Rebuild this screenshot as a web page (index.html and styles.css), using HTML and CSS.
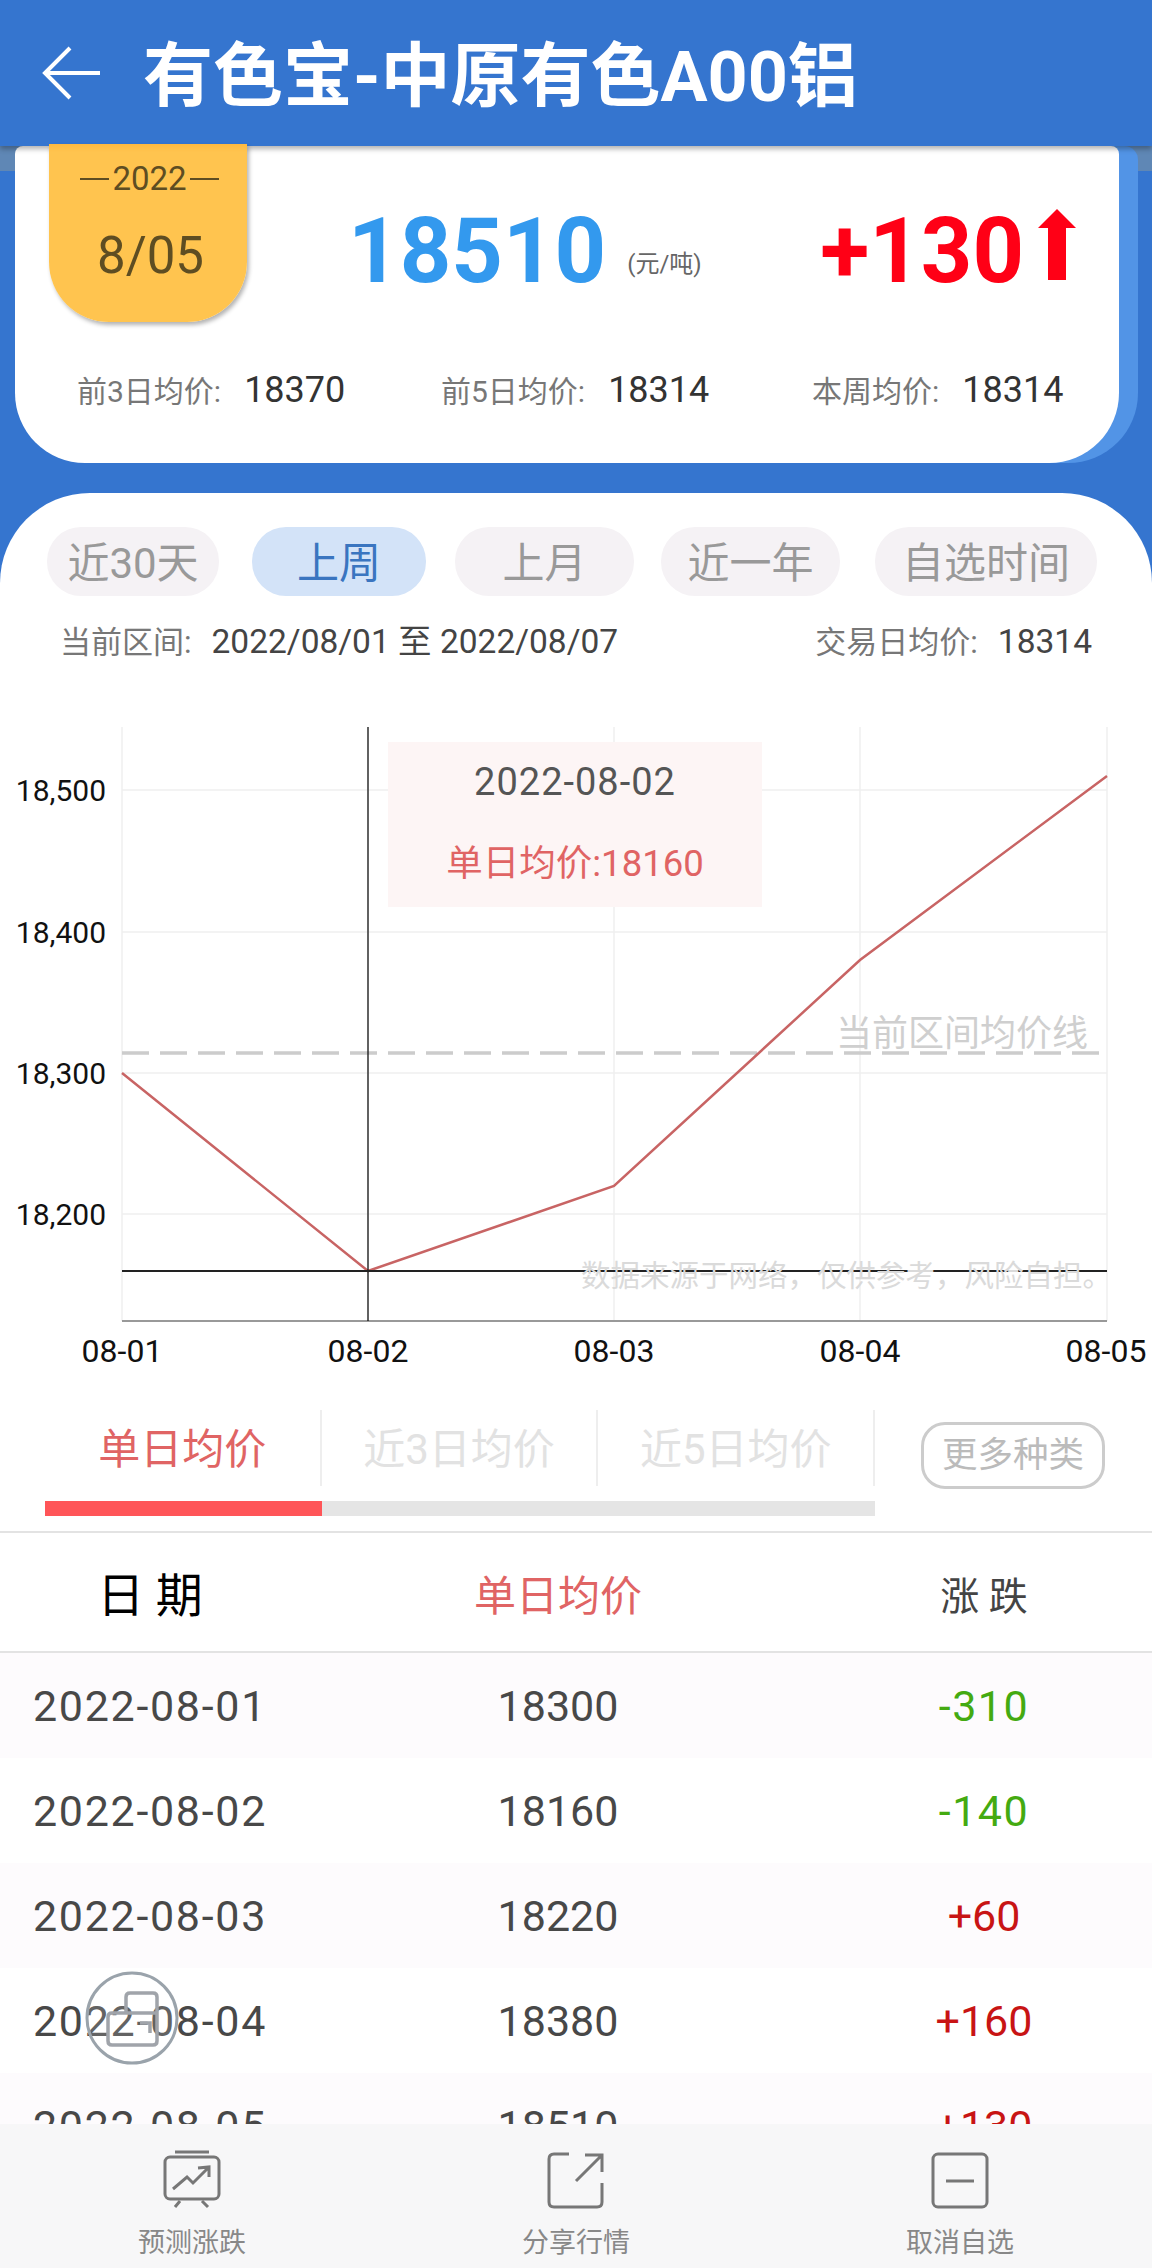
FILE: index.html
```html
<!DOCTYPE html>
<html>
<head>
    <title>有色宝-中原有色A00铝</title>
    <meta charset="utf-8">
    <link rel="stylesheet" href="styles.css">
</head>
<body>
    <div class="page">
        <div class="top-bar">
            <svg class="back-icon" viewBox="0 0 60 56" width="60" height="56">
                <path d="M28 3 L3 28 L28 53 M3 28 H58"></path>
            </svg>
            <div class="top-title">有色宝-中原有色A00铝</div>
        </div>

        <div class="summary">
            <div class="summary-shade"></div>
            <div class="summary-edge"></div>
            <div class="summary-card">
                <div class="summary-top">
                    <div class="date-tag">
                        <div class="date-year">2022</div>
                        <div class="date-day">8/05</div>
                    </div>
                    <div class="price">18510</div>
                    <div class="price-unit">(元/吨)</div>
                    <div class="change">+130</div>
                    <svg class="change-arrow" viewBox="0 0 38 71" width="38" height="71">
                        <path d="M19 0 L38 19 H28 V71 H10 V19 H0 Z"></path>
                    </svg>
                </div>
                <div class="summary-stats">
                    <div class="stat"><span class="stat-label">前3日均价:</span><span class="stat-value">18370</span></div>
                    <div class="stat"><span class="stat-label">前5日均价:</span><span class="stat-value">18314</span></div>
                    <div class="stat"><span class="stat-label">本周均价:</span><span class="stat-value">18314</span></div>
                </div>
            </div>
        </div>

        <div class="panel">
            <div class="pills">
                <div class="pill pill-30">近30天</div>
                <div class="pill pill-week active">上周</div>
                <div class="pill pill-month">上月</div>
                <div class="pill pill-year">近一年</div>
                <div class="pill pill-custom">自选时间</div>
            </div>
            <div class="range-row">
                <div><span class="range-label">当前区间:</span><span class="range-value">2022/08/01 至 2022/08/07</span></div>
                <div><span class="range-label">交易日均价:</span><span class="range-value">18314</span></div>
            </div>

            <svg class="chart" viewBox="0 700 1152 685" width="1152" height="685">
                <g class="grid">
                    <path d="M122 727 V1321 M368 727 V1321 M614 727 V1321 M860 727 V1321 M1107 727 V1321"></path>
                    <path d="M122 790 H1107 M122 932 H1107 M122 1073 H1107 M122 1214 H1107"></path>
                </g>
                <path class="axis" d="M122 1321 H1107"></path>
                <path class="avg-line" d="M122 1053 H1102"></path>
                <polyline class="price-line" points="122,1073 368,1271 614,1186 860,960 1107,776"></polyline>
                <path class="cross-v" d="M368 727 V1321"></path>
                <path class="cross-h" d="M122 1271 H1107"></path>

                <text class="y-label" x="106" y="801">18,500</text>
                <text class="y-label" x="106" y="943">18,400</text>
                <text class="y-label" x="106" y="1084">18,300</text>
                <text class="y-label" x="106" y="1225">18,200</text>

                <text class="x-label" x="122" y="1362">08-01</text>
                <text class="x-label" x="368" y="1362">08-02</text>
                <text class="x-label" x="614" y="1362">08-03</text>
                <text class="x-label" x="860" y="1362">08-04</text>
                <text class="x-label" x="1106" y="1362">08-05</text>

                <text class="avg-label" x="1088" y="1046">当前区间均价线</text>
                <text class="source-label" x="1112" y="1286">数据来源于网络&#xFF0C;仅供参考&#xFF0C;风险自担。</text>

                <rect class="tip-box" x="388" y="742" width="374" height="165"></rect>
                <text class="tip-date" x="575" y="795">2022-08-02</text>
                <text class="tip-value" x="575" y="876">单日均价:18160</text>
            </svg>

            <div class="tab-row">
                <div class="tab-group">
                    <div class="tabs">
                        <div class="tab active">单日均价</div>
                        <div class="tab">近3日均价</div>
                        <div class="tab">近5日均价</div>
                    </div>
                    <div class="tab-track"><div class="tab-track-on"></div></div>
                </div>
                <div class="more-btn">更多种类</div>
            </div>

            <div class="table-head">
                <div class="col-date head-date">日 期</div>
                <div class="col-avg head-avg">单日均价</div>
                <div class="col-change head-change">涨 跌</div>
            </div>
            <div class="table-body">
                <div class="row"><div class="col-date">2022-08-01</div><div class="col-avg">18300</div><div class="col-change down">-310</div></div>
                <div class="row"><div class="col-date">2022-08-02</div><div class="col-avg">18160</div><div class="col-change down">-140</div></div>
                <div class="row"><div class="col-date">2022-08-03</div><div class="col-avg">18220</div><div class="col-change up">+60</div></div>
                <div class="row"><div class="col-date">2022-08-04</div><div class="col-avg">18380</div><div class="col-change up">+160</div></div>
                <div class="row"><div class="col-date">2022-08-05</div><div class="col-avg">18510</div><div class="col-change up">+130</div></div>
            </div>
        </div>

        <div class="bottom-bar">
            <div class="bottom-item">
                <svg class="bottom-icon" viewBox="0 0 60 60" width="60" height="60">
                    <path d="M13 2 H47"></path>
                    <rect x="3" y="7" width="54" height="42" rx="5"></rect>
                    <path d="M18 51 L13 57 M40 51 L46 57"></path>
                    <path d="M11 39 L25 27 L31 33 L47 17 M36 18 L47 17 L47 27"></path>
                </svg>
                <div class="bottom-text">预测涨跌</div>
            </div>
            <div class="bottom-item">
                <svg class="bottom-icon" viewBox="0 0 60 60" width="60" height="60">
                    <path d="M23 4 H8 Q3 4 3 9 V52 Q3 57 8 57 H51 Q56 57 56 52 V33"></path>
                    <path d="M30 31 L56 5 M39 5 H56 V22"></path>
                </svg>
                <div class="bottom-text">分享行情</div>
            </div>
            <div class="bottom-item">
                <svg class="bottom-icon" viewBox="0 0 60 60" width="60" height="60">
                    <rect x="3" y="4" width="54" height="53" rx="5"></rect>
                    <path d="M16 31 H44"></path>
                </svg>
                <div class="bottom-text">取消自选</div>
            </div>
        </div>

        <div class="float-btn">
            <svg viewBox="0 0 96 96" width="96" height="96">
                <circle cx="48" cy="48" r="45"></circle>
                <path d="M42 43 V27 Q42 23 46 23 H69 Q73 23 73 27 V71 Q73 75 69 75 H28 Q24 75 24 71 V47 Q24 43 28 43 H73"></path>
                <path d="M56 53 H66 V63"></path>
            </svg>
        </div>
    </div>
</body>
</html>
```

FILE: styles.css
```css
body {
    margin: 0;
    padding: 0;
    background-color: #ffffff;
    font-family: Roboto, "Noto Sans CJK SC", sans-serif;
}
.page {
    position: relative;
    display: flex;
    flex-direction: column;
    width: 1152px;
    height: 2268px;
    overflow: hidden;
    background-color: #3575cf;
}

/* top bar */
.top-bar {
    display: flex;
    align-items: center;
    flex-shrink: 0;
    height: 146px;
    padding: 0 0 0 42px;
    box-sizing: border-box;
    position: relative;
    z-index: 3;
    background-color: #3575cf;
    box-shadow: 0 3px 5px rgba(0, 0, 0, 0.3);
}
.back-icon {
    flex-shrink: 0;
    fill: none;
    stroke: #ffffff;
    stroke-width: 4;
}
.top-title {
    margin: 0 0 6px 41px;
    color: #ffffff;
    font-size: 70px;
    font-weight: 700;
    white-space: nowrap;
}

/* summary card */
.summary {
    position: relative;
    flex-shrink: 0;
    height: 317px;
    margin-bottom: 30px;
}
.summary-shade {
    position: absolute;
    top: 0;
    left: 0;
    right: 0;
    height: 25px;
    background-color: #5f87b5;
}
.summary-edge {
    position: absolute;
    top: 0;
    right: 14px;
    width: 120px;
    height: 317px;
    background-color: #5294e6;
    border-radius: 14px 14px 70px 0;
}
.summary-card {
    position: absolute;
    top: 0;
    left: 15px;
    width: 1104px;
    height: 317px;
    background-color: #ffffff;
    border-radius: 8px 8px 70px 70px;
}
.summary-top {
    display: flex;
    align-items: flex-start;
    height: 188px;
    padding-left: 34px;
}
.date-tag {
    position: relative;
    z-index: 4;
    flex-shrink: 0;
    width: 198px;
    height: 178px;
    margin-top: -2px;
    text-align: center;
    color: #5e4d22;
    background: linear-gradient(#ffb93f, #ffc44f 8px);
    border-radius: 0 0 60px 60px;
    box-shadow: 2px 3px 4px rgba(0, 0, 0, 0.3);
}
.date-year {
    display: flex;
    align-items: center;
    justify-content: center;
    gap: 3px;
    margin-top: 15px;
    padding-left: 3px;
    font-size: 33px;
    line-height: 40px;
}
.date-year::before,
.date-year::after {
    content: "";
    width: 29px;
    height: 2px;
    background-color: #5e4d22;
}
.date-day {
    margin-top: 29px;
    padding-left: 5px;
    font-size: 51px;
    line-height: 56px;
}
.price {
    margin: 53px 0 0 101px;
    color: #3399ee;
    font-size: 90px;
    font-weight: 700;
    line-height: 106px;
}
.price-unit {
    flex-shrink: 0;
    margin: 104px 0 0 21px;
    width: 193px;
    color: #666666;
    font-size: 24px;
    line-height: 28px;
}
.change {
    margin: 53px 0 0 0;
    color: #ff0016;
    font-size: 90px;
    font-weight: 700;
    line-height: 106px;
}
.change-arrow {
    flex-shrink: 0;
    margin: 63px 0 0 14px;
    fill: #ff0016;
}
.summary-stats {
    display: grid;
    grid-template-columns: 364px 371px auto;
    padding: 33px 0 0 62px;
}
.stat {
    display: flex;
    align-items: baseline;
    white-space: nowrap;
}
.stat-label {
    color: #777777;
    font-size: 30px;
}
.stat-value {
    margin-left: 23px;
    color: #333333;
    font-size: 36px;
}

/* lower panel */
.panel {
    flex: 1;
    display: flex;
    flex-direction: column;
    min-height: 0;
    background-color: #ffffff;
    border-radius: 90px 90px 0 0;
}
.pills {
    display: flex;
    flex-shrink: 0;
    padding: 34px 0 0 47px;
}
.pill {
    height: 69px;
    line-height: 73px;
    text-align: center;
    font-size: 42px;
    color: #999999;
    background-color: #f5f2f5;
    border-radius: 34px;
}
.pill.active {
    color: #3a75c0;
    background-color: #d3e3f8;
}
.pill-30 { width: 172px; }
.pill-week { width: 174px; margin-left: 33px; }
.pill-month { width: 179px; margin-left: 29px; }
.pill-year { width: 179px; margin-left: 27px; }
.pill-custom { width: 222px; margin-left: 35px; }
.range-row {
    display: flex;
    justify-content: space-between;
    flex-shrink: 0;
    padding: 23px 60px 0 60px;
    line-height: 46px;
}
.range-label {
    color: #777777;
    font-size: 31px;
}
.range-value {
    margin-left: 20px;
    color: #444444;
    font-size: 33.5px;
}

/* chart */
.chart {
    display: block;
    flex-shrink: 0;
    margin-top: 29px;
    overflow: visible;
}
.grid path {
    fill: none;
    stroke: #f0f0f0;
    stroke-width: 1.5;
}
.axis {
    stroke: #999999;
    stroke-width: 2;
}
.avg-line {
    stroke: #cccccc;
    stroke-width: 3.5;
    stroke-dasharray: 27 11;
}
.price-line {
    fill: none;
    stroke: #c86464;
    stroke-width: 2.5;
}
.cross-v {
    stroke: #000000;
    stroke-width: 1.2;
}
.cross-h {
    stroke: #222222;
    stroke-width: 2;
}
.y-label {
    fill: #111111;
    font-size: 30px;
    text-anchor: end;
}
.x-label {
    fill: #111111;
    font-size: 32px;
    text-anchor: middle;
}
.avg-label {
    fill: #cfcfcf;
    font-size: 36px;
    text-anchor: end;
}
.source-label {
    fill: #dadada;
    font-size: 29.5px;
    text-anchor: end;
}
.tip-box {
    fill: #fdf5f5;
}
.tip-date {
    fill: #555555;
    font-size: 38px;
    letter-spacing: 1px;
    text-anchor: middle;
}
.tip-value {
    fill: #e06464;
    font-size: 36.5px;
    text-anchor: middle;
}

/* tabs */
.tab-row {
    display: flex;
    align-items: flex-start;
    flex-shrink: 0;
    padding: 25px 0 0 45px;
}
.tab-group {
    width: 830px;
}
.tabs {
    display: flex;
    height: 76px;
}
.tab {
    flex: 1;
    box-sizing: border-box;
    border-right: 2px solid #eeeeee;
    text-align: center;
    color: #e2e2e2;
    font-size: 42px;
    line-height: 80px;
}
.tab.active {
    color: #e06464;
}
.tab-track {
    height: 15px;
    margin-top: 15px;
    background-color: #e5e5e5;
}
.tab-track-on {
    width: 277px;
    height: 15px;
    background-color: #ff5558;
}
.more-btn {
    box-sizing: border-box;
    width: 184px;
    height: 67px;
    margin: 12px 0 0 46px;
    border: 3px solid #cccccc;
    border-radius: 24px;
    color: #bbbbbb;
    font-size: 35.5px;
    line-height: 60px;
    text-align: center;
}

/* table */
.table-head {
    display: flex;
    align-items: center;
    flex-shrink: 0;
    height: 118px;
    margin-top: 15px;
    border-top: 2px solid #e3e3e3;
    border-bottom: 2px solid #e3e3e3;
}
.col-date { width: 300px; text-align: center; }
.col-avg { width: 516px; text-align: center; }
.col-change { width: 336px; text-align: center; }
.head-date {
    color: #000000;
    font-size: 47px;
    padding-bottom: 2px;
}
.head-avg {
    color: #e06464;
    font-size: 42px;
}
.head-change {
    color: #444444;
    font-size: 39px;
    padding-top: 2px;
}
.table-body {
    flex: 1;
    min-height: 0;
    overflow: hidden;
}
.row {
    display: flex;
    align-items: center;
    height: 105px;
    color: #484848;
    font-size: 43px;
}
.row:nth-child(odd) {
    background-color: #fdfbfd;
}
.row .col-date {
    letter-spacing: 1.7px;
}
.down { color: #44aa11; letter-spacing: 1.5px; }
.up { color: #c81414; }

/* bottom bar */
.bottom-bar {
    display: grid;
    grid-template-columns: repeat(3, 1fr);
    flex-shrink: 0;
    height: 144px;
    background-color: #f7f7f8;
}
.bottom-item {
    display: flex;
    flex-direction: column;
    align-items: center;
    padding-top: 26px;
}
.bottom-icon {
    fill: none;
    stroke: #777777;
    stroke-width: 3;
}
.bottom-text {
    margin-top: 15px;
    color: #888888;
    font-size: 27px;
    line-height: 36px;
}

/* floating button */
.float-btn {
    position: absolute;
    left: 84px;
    top: 1970px;
    width: 96px;
    height: 96px;
}
.float-btn circle {
    fill: rgba(255, 255, 255, 0.15);
    stroke: #9aa3ab;
    stroke-width: 3;
}
.float-btn path {
    fill: none;
    stroke: #a0a4aa;
    stroke-width: 3.5;
}
```
